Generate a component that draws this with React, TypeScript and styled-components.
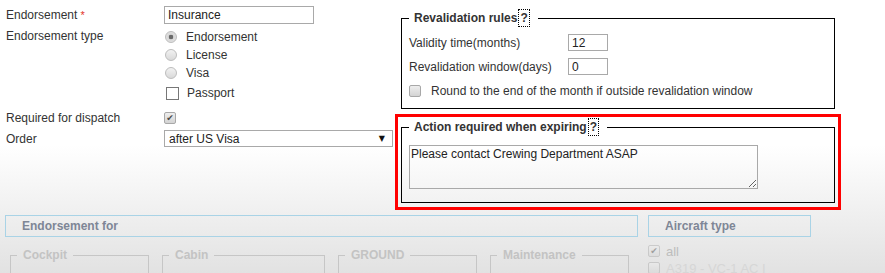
import React from "react";
import styled, { createGlobalStyle } from "styled-components";

const GlobalStyle = createGlobalStyle`
  html, body {
    margin: 0;
    padding: 0;
  }
  body {
    font-family: "Liberation Sans", Arial, sans-serif;
    font-size: 12px;
    color: #333;
  }
`;

const Page = styled.div`
  width: 885px;
  height: 273px;
  overflow: hidden;
  background: linear-gradient(to bottom, #fff 0, #fff 145px, #e2e2e2 273px);
`;

const Top = styled.div`
  display: flex;
  height: 215px;
`;

const LeftColumn = styled.div`
  width: 389px;
  padding: 6px 0 0 6px;
`;

const RightColumn = styled.div`
  width: 446px;
  display: flex;
  flex-direction: column;
`;

const FormRow = styled.div<{ $top?: number; $height?: number }>`
  display: flex;
  align-items: ${(p) => (p.$height ? "center" : "flex-start")};
  margin-top: ${(p) => p.$top ?? 0}px;
  height: ${(p) => (p.$height ? `${p.$height}px` : "auto")};
`;

const Label = styled.div`
  width: 158px;
  flex-shrink: 0;
  line-height: 18px;
`;

const Required = styled.span`
  color: #e3322b;
  margin-left: 3px;
  font-size: 11px;
  vertical-align: top;
`;

const TextInput = styled.input`
  box-sizing: border-box;
  width: ${(p) => p.width ?? 150}px;
  height: ${(p) => p.height ?? 18}px;
  border: 1px solid #a9a9a9;
  padding: 0 3px;
  margin: 0;
  font-family: inherit;
  font-size: 12px;
  color: #222;
  background: #fff;
  outline: none;
`;

const OptionList = styled.div`
  display: flex;
  flex-direction: column;
  margin-top: 1px;
`;

const OptionItem = styled.div<{ $height?: number; $top?: number }>`
  display: flex;
  align-items: center;
  height: ${(p) => p.$height ?? 18}px;
  margin-top: ${(p) => p.$top ?? 0}px;
  color: #333;
`;

const Radio = styled.span<{ $checked?: boolean }>`
  box-sizing: border-box;
  width: 12px;
  height: 12px;
  margin: 0 9px 0 1px;
  border-radius: 50%;
  border: 1px solid #bdbdbd;
  background: ${(p) =>
    p.$checked
      ? "radial-gradient(circle, #6a6a6a 0, #6a6a6a 2px, #d6d6d6 2.6px, #e8e8e8 100%)"
      : "linear-gradient(to bottom, #f2f2f2, #d9d9d9)"};
`;

const Check = styled.span<{ $variant: "plain" | "gray"; $faded?: boolean; $gap?: number; $left?: number }>`
  box-sizing: border-box;
  display: inline-flex;
  align-items: center;
  justify-content: center;
  flex-shrink: 0;
  width: ${(p) => (p.$variant === "plain" ? 13 : 12)}px;
  height: ${(p) => (p.$variant === "plain" ? 13 : 12)}px;
  margin-left: ${(p) => p.$left ?? 0}px;
  margin-right: ${(p) => p.$gap ?? 8}px;
  border: 1px solid ${(p) => (p.$variant === "plain" ? "#777" : "#a8a8a8")};
  border-radius: ${(p) => (p.$variant === "plain" ? 0 : 2)}px;
  background: ${(p) =>
    p.$variant === "plain" ? "#fff" : "linear-gradient(to bottom, #eeeeee, #d3d3d3)"};
  color: #4a4a4a;
  font-family: "DejaVu Sans", sans-serif;
  font-size: 9px;
  line-height: 1;
  opacity: ${(p) => (p.$faded ? 0.45 : 1)};
`;

const SelectBox = styled.div`
  box-sizing: border-box;
  width: 229px;
  height: 17px;
  border: 1px solid #a9a9a9;
  background: #fff;
  display: flex;
  align-items: center;
  justify-content: space-between;
  padding: 0 7px 0 4px;
  color: #222;
`;

const Arrow = styled.span`
  font-family: "DejaVu Sans", sans-serif;
  font-size: 8px;
  color: #111;
`;

const Fieldset = styled.fieldset<{ $rules?: boolean }>`
  box-sizing: border-box;
  width: 434px;
  min-width: 0;
  margin: ${(p) => (p.$rules ? "9px 6px 0" : "0")};
  border: 1px solid #000;
  padding: ${(p) => (p.$rules ? "7px 7px 9px" : "9px 7px 13px")};
`;

const Legend = styled.legend`
  padding: 0 8px 0 5px;
  font-weight: bold;
  line-height: 18px;
  color: #333;
`;

const Help = styled.span`
  display: inline-block;
  border: 1px dotted #000;
  padding: 0 1px;
  line-height: 16px;
  margin-left: 1px;
`;

const RuleRow = styled.div<{ $gap?: number }>`
  display: grid;
  grid-template-columns: 159px 40px;
  align-items: center;
  height: 17px;
  margin-top: ${(p) => p.$gap ?? 0}px;
`;

const CheckRow = styled.div`
  display: flex;
  align-items: center;
  height: 17px;
  margin-top: 7px;
`;

const Highlight = styled.div`
  margin-top: 5px;
  border: 3px solid #ff0000;
  padding: 1px 3px 4px;
`;

const Notes = styled.textarea`
  display: block;
  box-sizing: border-box;
  width: 349px;
  height: 44px;
  margin: 0;
  padding: 1px;
  border: 1px solid #a9a9a9;
  background: transparent;
  font-family: "Liberation Sans", Arial, sans-serif;
  font-size: 12px;
  color: #222;
  outline: none;
`;

const Bottom = styled.div`
  display: grid;
  grid-template-columns: 633px 163px;
  column-gap: 10px;
  padding-left: 5px;
`;

const SectionHeader = styled.div`
  box-sizing: border-box;
  height: 22px;
  border: 1px solid #a9d3e6;
  padding-left: 16px;
  line-height: 20px;
  font-weight: bold;
  color: #7e8696;
`;

const GroupRow = styled.div`
  display: flex;
  gap: 13px;
  padding-left: 5px;
  margin-top: 10px;
`;

const Group = styled.fieldset<{ $width: number }>`
  box-sizing: border-box;
  width: ${(p) => p.$width}px;
  min-width: 0;
  height: 40px;
  margin: 0;
  padding: 0 6px;
  border: 1px solid #c6c6c6;
  border-bottom: none;
`;

const GroupLegend = styled.legend`
  padding: 0 6px;
  font-weight: bold;
  line-height: 16px;
  color: #c3c3c3;
`;

const AircraftList = styled.div`
  margin-top: 8px;
  display: flex;
  flex-direction: column;
  gap: 5px;
`;

const AircraftItem = styled.div<{ $dim?: boolean }>`
  display: flex;
  align-items: center;
  height: 12px;
  color: ${(p) => (p.$dim ? "#d6d6d6" : "#bdbdbd")};
  font-size: 13px;
`;

export default function App() {
  return (
    <Page>
      <GlobalStyle />
      <Top>
        <LeftColumn>
          <FormRow $height={18}>
            <Label>
              Endorsement<Required>*</Required>
            </Label>
            <TextInput defaultValue="Insurance" />
          </FormRow>
          <FormRow $top={3}>
            <Label>Endorsement type</Label>
            <OptionList>
              <OptionItem>
                <Radio $checked />
                Endorsement
              </OptionItem>
              <OptionItem>
                <Radio />
                License
              </OptionItem>
              <OptionItem>
                <Radio />
                Visa
              </OptionItem>
              <OptionItem $height={20} $top={1}>
                <Check $variant="plain" $left={2} $gap={8} />
                Passport
              </OptionItem>
            </OptionList>
          </FormRow>
          <FormRow $top={6} $height={18}>
            <Label>Required for dispatch</Label>
            <Check $variant="gray">✔</Check>
          </FormRow>
          <FormRow $top={3} $height={17}>
            <Label>Order</Label>
            <SelectBox>
              after US Visa
              <Arrow>▼</Arrow>
            </SelectBox>
          </FormRow>
        </LeftColumn>

        <RightColumn>
          <Fieldset $rules>
            <Legend>
              Revalidation rules<Help>?</Help>
            </Legend>
            <RuleRow>
              <span>Validity time(months)</span>
              <TextInput width={40} height={17} defaultValue="12" />
            </RuleRow>
            <RuleRow $gap={7}>
              <span>Revalidation window(days)</span>
              <TextInput width={40} height={17} defaultValue="0" />
            </RuleRow>
            <CheckRow>
              <Check $variant="gray" $gap={10} />
              Round to the end of the month if outside revalidation window
            </CheckRow>
          </Fieldset>

          <Highlight>
            <Fieldset>
              <Legend>
                Action required when expiring<Help>?</Help>
              </Legend>
              <Notes defaultValue="Please contact Crewing Department ASAP" />
            </Fieldset>
          </Highlight>
        </RightColumn>
      </Top>

      <Bottom>
        <div>
          <SectionHeader>Endorsement for</SectionHeader>
          <GroupRow>
            <Group $width={139}>
              <GroupLegend>Cockpit</GroupLegend>
            </Group>
            <Group $width={163}>
              <GroupLegend>Cabin</GroupLegend>
            </Group>
            <Group $width={139}>
              <GroupLegend>GROUND</GroupLegend>
            </Group>
            <Group $width={139}>
              <GroupLegend>Maintenance</GroupLegend>
            </Group>
          </GroupRow>
        </div>
        <div>
          <SectionHeader>Aircraft type</SectionHeader>
          <AircraftList>
            <AircraftItem>
              <Check $variant="gray" $faded $gap={6}>
                ✔
              </Check>
              all
            </AircraftItem>
            <AircraftItem $dim>
              <Check $variant="gray" $faded $gap={6} />
              A319 - VC-1 AC I
            </AircraftItem>
          </AircraftList>
        </div>
      </Bottom>
    </Page>
  );
}
